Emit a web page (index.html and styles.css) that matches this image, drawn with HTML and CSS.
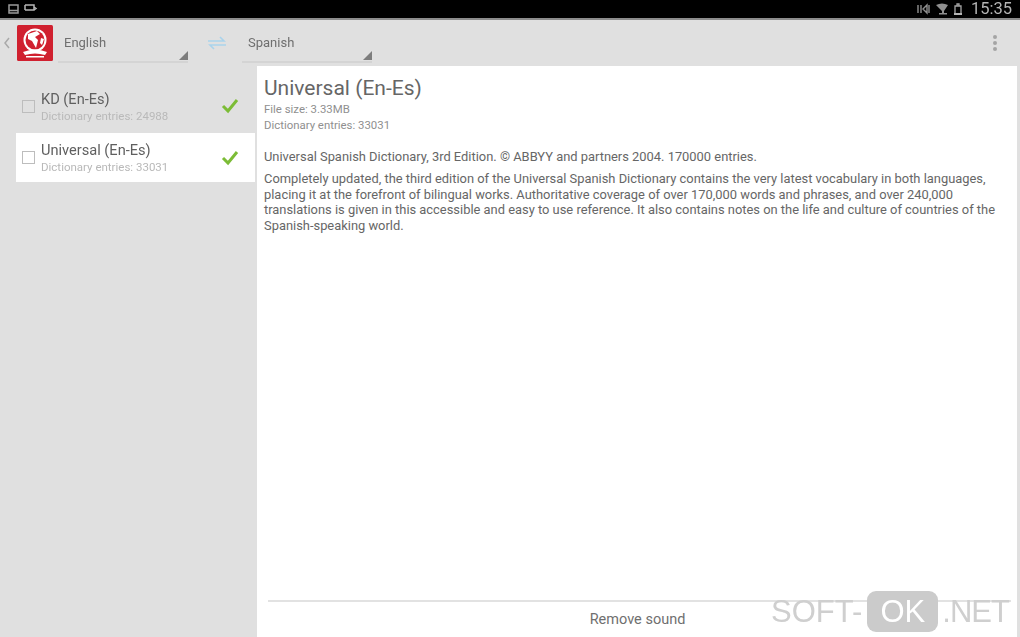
FILE: index.html
```html
<!DOCTYPE html>
<html>
<head>
  <title>Dictionary Manager</title>
  <meta name="viewport" content="width=device-width, initial-scale=1.0">
  <link rel="stylesheet" href="styles.css">
</head>
<body>
  <div class="screen">
    <div class="status-bar">
      <div class="status-left">
        <svg width="32" height="12" viewBox="0 0 32 12">
          <path d="M2 2h9v8H2zM2 7.500h9" fill="none" stroke="#9a9a9a" stroke-width="1.500"/>
          <path d="M18 2h9v5h-9M18 2v5M27 4l2 1.500-2 1.500" fill="none" stroke="#b5b5b5" stroke-width="1.500"/>
        </svg>
      </div>
      <div class="status-right">
        <svg width="52" height="14" viewBox="0 0 52 14">
          <path d="M1 3v8M4 3v8M6 7l4-4v8zM12 3v8" fill="none" stroke="#8f8f8f" stroke-width="1.400"/>
          <path d="M19 3q6-3 12 0l-4 6v2h3v1.500h-8V11h3V9z" fill="#8f8f8f"/>
          <path d="M38 4h6v8h-6zM40 2h2v2h-2z" fill="none" stroke="#a5a5a5" stroke-width="1.300"/>
          <path d="M37 11h8v2h-8z" fill="#b5b5b5"/>
        </svg>
        <span class="clock">15:35</span>
      </div>
    </div>

    <div class="toolbar">
      <svg class="back" width="8" height="12" viewBox="0 0 8 12">
        <path d="M6 1L2 6l4 5" fill="none" stroke="#a9a9a9" stroke-width="1.500"/>
      </svg>
      <div class="logo">
        <svg width="36" height="36" viewBox="0 0 36 36">
          <rect width="36" height="36" rx="1.500" fill="#d0202f"/>
          <circle cx="18" cy="15" r="11.500" fill="#fff"/>
          <circle cx="18" cy="15" r="9.500" fill="#d0202f"/>
          <path d="M11 9l9-3 3 3-5 3 3 3-2 8-4-7-4-2zM24 13l3 1-2 6-2-2z" fill="#fff"/>
          <path d="M6 27q12-5 24 0l-2 3q-10-3-20 0zM9 31h18v1.500H9z" fill="#fff"/>
        </svg>
      </div>
      <div class="spinner spinner-from">English</div>
      <svg class="swap" width="20" height="14" viewBox="0 0 20 14">
        <path d="M1 5h16l-4-4M19 9H3l4 4" fill="none" stroke="#a9d3ec" stroke-width="1.600"/>
      </svg>
      <div class="spinner spinner-to">Spanish</div>
      <div class="overflow">
        <span></span><span></span><span></span>
      </div>
    </div>

    <div class="content">
      <div class="sidebar">
        <div class="dict-item">
          <span class="checkbox"></span>
          <div class="dict-text">
            <div class="dict-name">KD (En-Es)</div>
            <div class="dict-entries">Dictionary entries: 24988</div>
          </div>
          <svg class="tick" width="18" height="16" viewBox="0 0 18 16">
            <path d="M2 8l5 5L16 2" fill="none" stroke="#7cbc36" stroke-width="3"/>
          </svg>
        </div>
        <div class="dict-item dict-item-active">
          <span class="checkbox"></span>
          <div class="dict-text">
            <div class="dict-name">Universal (En-Es)</div>
            <div class="dict-entries">Dictionary entries: 33031</div>
          </div>
          <svg class="tick" width="18" height="16" viewBox="0 0 18 16">
            <path d="M2 8l5 5L16 2" fill="none" stroke="#7cbc36" stroke-width="3"/>
          </svg>
        </div>
      </div>

      <div class="details">
        <div class="details-body">
          <h1>Universal (En-Es)</h1>
          <p class="meta">File size: 3.33MB</p>
          <p class="meta">Dictionary entries: 33031</p>
          <p class="summary">Universal Spanish Dictionary, 3rd Edition. © ABBYY and partners 2004. 170000 entries.</p>
          <p class="description">Completely updated, the third edition of the Universal Spanish Dictionary contains the very latest vocabulary in both languages,<br>placing it at the forefront of bilingual works. Authoritative coverage of over 170,000 words and phrases, and over 240,000<br>translations is given in this accessible and easy to use reference. It also contains notes on the life and culture of countries of the<br>Spanish-speaking world.</p>
        </div>
        <div class="details-footer">Remove sound</div>
      </div>
    </div>

    <div class="watermark">
      <span>SOFT-</span><span class="watermark-ok">OK</span><span class="watermark-net">.NET</span>
    </div>
  </div>
</body>
</html>
```

FILE: styles.css
```css
* {
  margin: 0;
  padding: 0;
  box-sizing: border-box;
}

body {
  font-family: Roboto, 'Liberation Sans', sans-serif;
  background: #e0e0e0;
  overflow: hidden;
}

.screen {
  position: relative;
  width: 1020px;
  height: 637px;
  display: flex;
  flex-direction: column;
}

.status-bar {
  height: 20px;
  flex-shrink: 0;
  background: #000;
  border-bottom: 2px solid #8c8c8c;
  display: flex;
  align-items: center;
  justify-content: space-between;
  padding: 0 8px 0 7px;
  filter: blur(0.5px);
}

.status-left {
  display: flex;
}

.status-right {
  display: flex;
  align-items: center;
  gap: 2px;
}

.clock {
  color: #b4b4b4;
  font-size: 16.500px;
  line-height: 18px;
}

.toolbar {
  height: 46px;
  flex-shrink: 0;
  display: flex;
  align-items: center;
  padding-left: 3px;
  background: #e0e0e0;
  filter: blur(0.6px);
}

.back {
  margin-right: 6px;
}

.logo {
  width: 36px;
  height: 36px;
  margin-right: 5px;
  margin-top: -1px;
}

.spinner {
  position: relative;
  height: 37px;
  margin-top: 2px;
  padding: 8px 0 0 6px;
  font-size: 13px;
  line-height: 17px;
  color: #6f6f6f;
  border-bottom: 2px solid #d4d4d4;
}

.spinner::after {
  content: "";
  position: absolute;
  right: 0;
  bottom: 1px;
  border-style: solid;
  border-width: 0 0 9px 9px;
  border-color: transparent transparent #7d7d7d transparent;
}

.spinner-from {
  width: 130px;
}

.spinner-to {
  width: 130px;
}

.swap {
  margin: 0 15px 0 19px;
}

.overflow {
  margin-left: auto;
  margin-right: 23px;
  display: flex;
  flex-direction: column;
  gap: 2px;
}

.overflow span {
  width: 4px;
  height: 4px;
  border-radius: 50%;
  background: #a4a4a4;
}

.content {
  flex: 1;
  display: flex;
  min-height: 0;
  filter: blur(0.6px);
}

.sidebar {
  width: 257px;
  flex-shrink: 0;
  padding: 14px 0 0 16px;
}

.dict-item {
  height: 52px;
  display: flex;
  align-items: center;
  padding: 0 18px 0 6px;
}

.dict-item-active {
  height: 49px;
  margin-top: 1px;
  margin-right: 2px;
  padding-right: 16px;
  background: #fff;
}

.checkbox {
  width: 13px;
  height: 13px;
  border: 1.500px solid #bdbdbd;
  flex-shrink: 0;
  margin-right: 6px;
}

.dict-text {
  flex: 1;
}

.dict-name {
  font-size: 14.600px;
  line-height: 18px;
  color: #5f5f5f;
}

.dict-entries {
  font-size: 11.500px;
  line-height: 14px;
  margin-top: 1px;
  color: #b9b9b9;
}

.details {
  flex: 1;
  margin-right: 3px;
  background: #fff;
  display: flex;
  flex-direction: column;
  min-height: 0;
}

.details-body {
  flex: 1;
  padding: 9px 7px 0 7px;
}

.details-body h1 {
  font-size: 21px;
  font-weight: 400;
  line-height: 26px;
  color: #666;
}

.meta {
  font-size: 11.400px;
  line-height: 16px;
  color: #8f8f8f;
}

.summary {
  margin-top: 16px;
  font-size: 12.900px;
  line-height: 16px;
  color: #666;
}

.description {
  margin-top: 6px;
  font-size: 12.900px;
  line-height: 15.500px;
  color: #666;
  white-space: nowrap;
}

.details-footer {
  height: 37px;
  margin: 0 6px 0 11px;
  padding-right: 4px;
  border-top: 2px solid #e2e2e2;
  text-align: center;
  font-size: 14.500px;
  line-height: 35px;
  color: #6f6f6f;
}

.watermark {
  position: absolute;
  left: 771px;
  top: 591px;
  display: flex;
  align-items: center;
  font-family: 'Liberation Sans', Arial, sans-serif;
  font-size: 31px;
  line-height: 41px;
  color: #cfcfcf;
}

.watermark-ok {
  width: 71px;
  height: 41px;
  margin: 0 4px 0 5px;
  border-radius: 9px;
  background: #cbcbcb;
  color: #fff;
  text-align: center;
}

.watermark-net {
  letter-spacing: -1px;
}
```
